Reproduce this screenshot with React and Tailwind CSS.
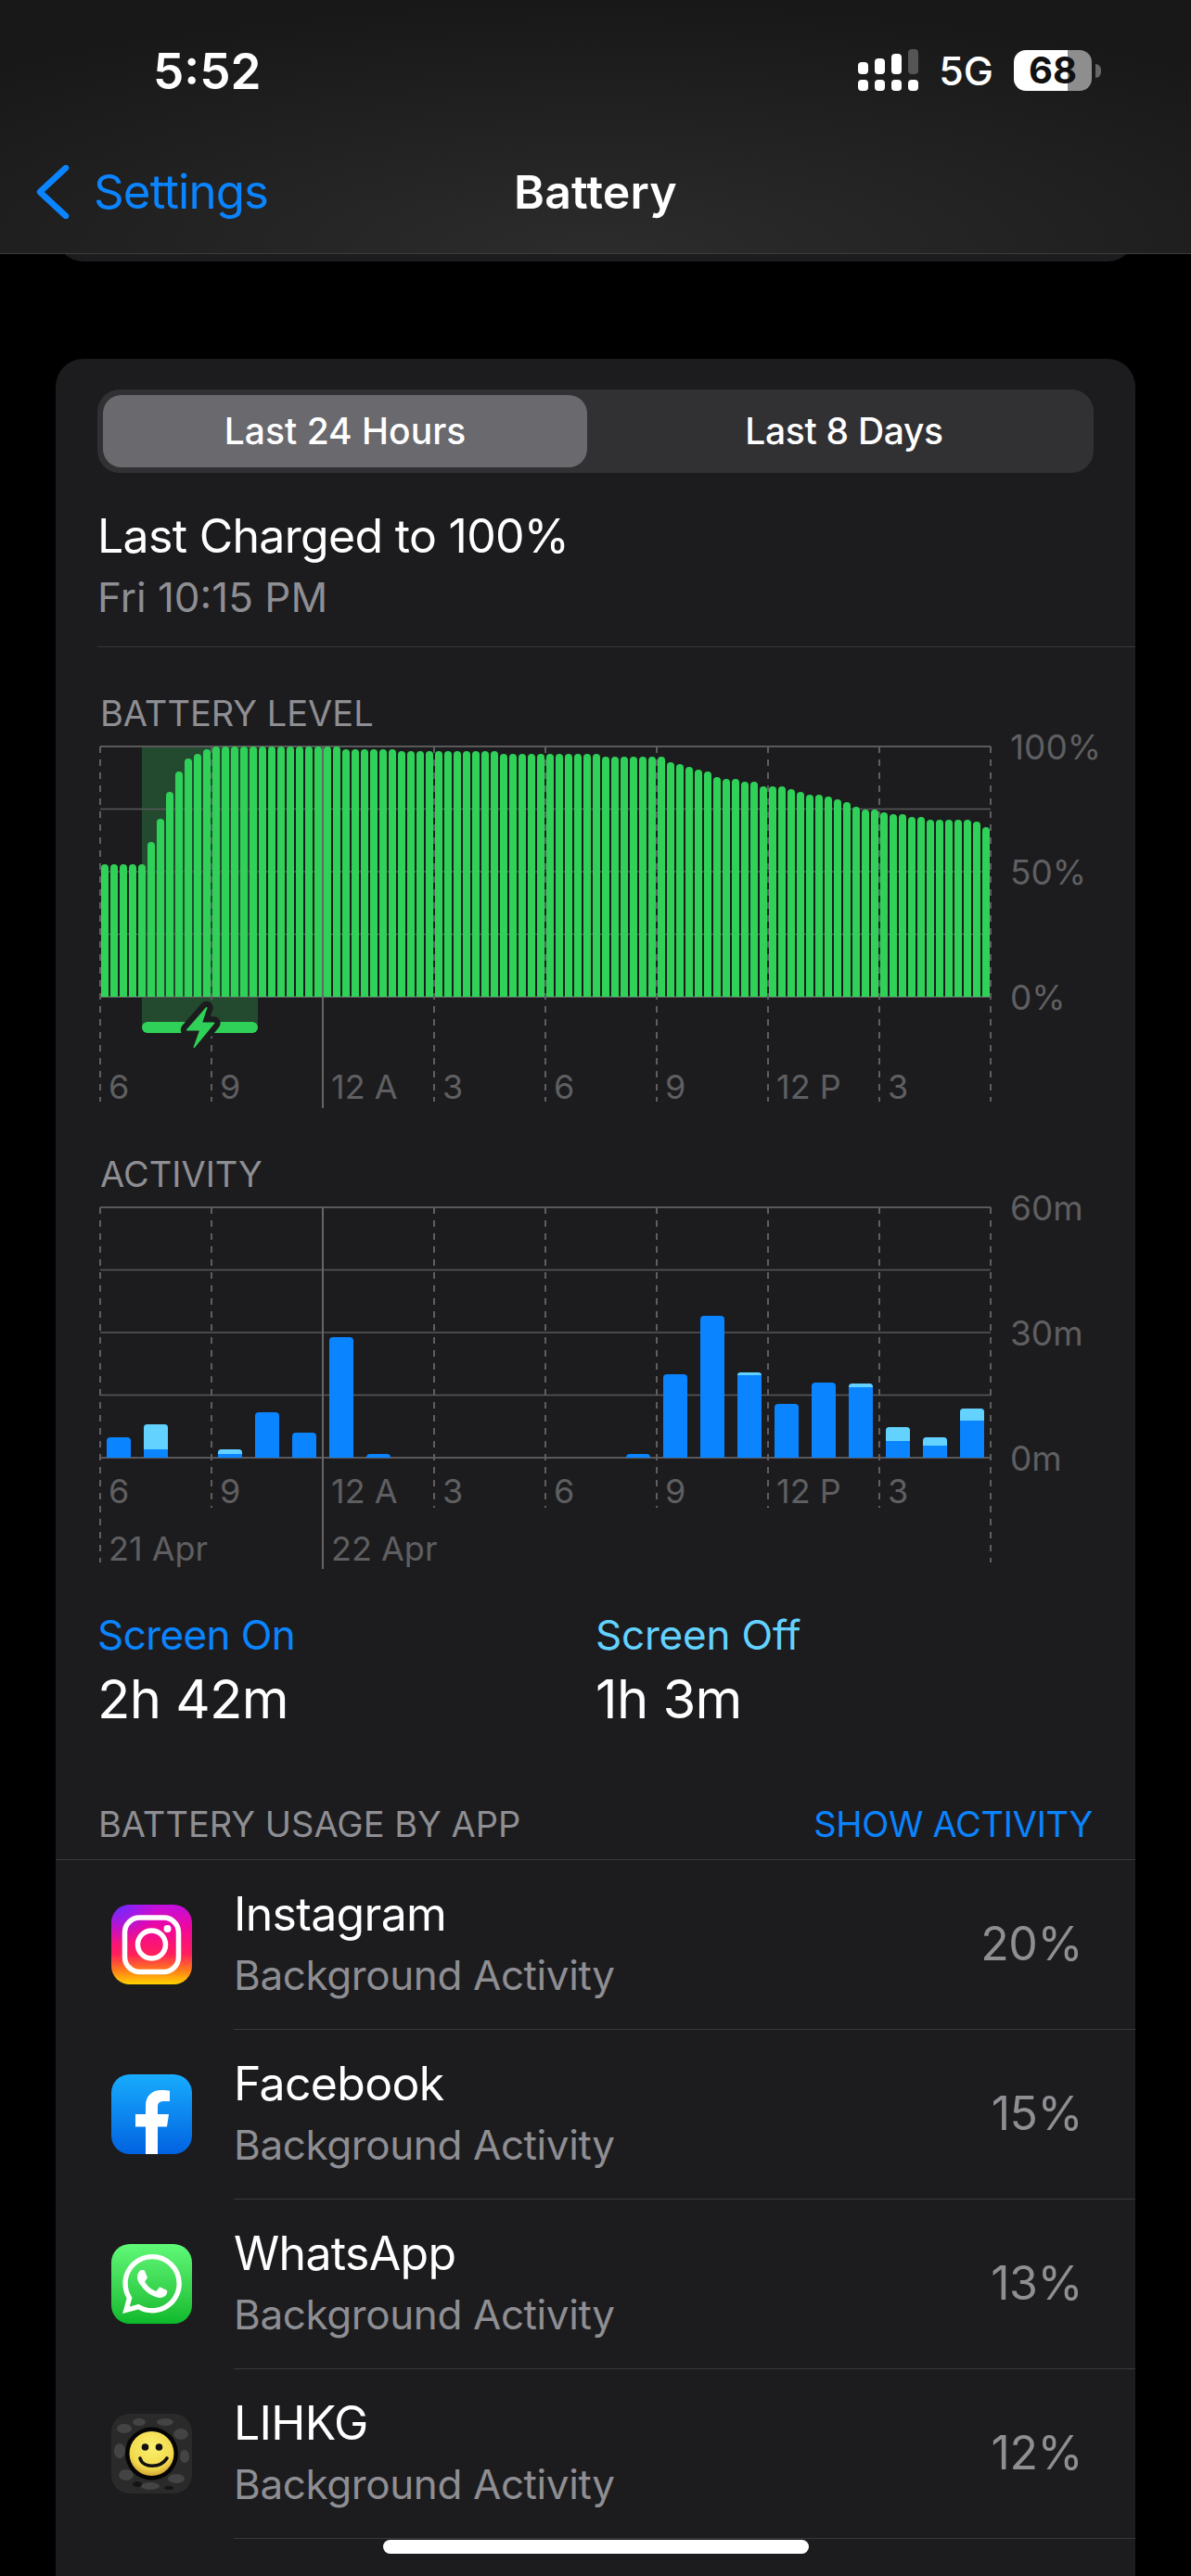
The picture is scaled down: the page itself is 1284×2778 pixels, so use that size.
import React from 'react';
import { SiWhatsapp } from 'react-icons/si';

const batteryTops = [
  932, 932, 932, 932, 932, 908, 883, 854, 832, 818, 813, 808,
  805, 805, 805, 805, 805, 805, 805, 805, 805, 805, 805, 805, 805, 805,
  808, 808, 808, 808, 808, 808,
  810, 810, 810, 810, 810, 810, 810, 810, 810, 810, 810,
  813, 813, 813, 813, 813, 813, 813, 813, 813, 813, 813,
  816, 816, 816, 816, 816, 816, 816,
  822, 824, 827, 830, 832, 838, 840, 840, 843, 843, 848, 848, 848, 851, 854, 857, 857, 859, 862, 865,
  870, 873, 873, 876, 878, 878, 881, 881, 884, 884, 884, 884, 884, 886, 892,
];

// [index, total height, light part on top]
const activityBars = [
  [0, 22, 0], [1, 36, 27], [3, 9, 5], [4, 49, 0], [5, 27, 0], [6, 130, 0], [7, 4, 0],
  [14, 4, 0], [15, 90, 0], [16, 153, 0], [17, 92, 3], [18, 58, 0], [19, 81, 0], [20, 80, 4],
  [21, 33, 15], [22, 22, 9], [23, 53, 13],
];

const apps = [
  { name: 'Instagram', pct: '20%', icon: <InstagramIcon /> },
  { name: 'Facebook', pct: '15%', icon: <FacebookIcon /> },
  { name: 'WhatsApp', pct: '13%', icon: <WhatsAppIcon /> },
  { name: 'LIHKG', pct: '12%', icon: <LihkgIcon /> },
];

function InstagramIcon() {
  return (
    <svg width="87" height="86" viewBox="0 0 87 86">
      <defs>
        <linearGradient id="igBase" x1="0" y1="0" x2="0" y2="1">
          <stop offset="0" stopColor="#c00fe0" />
          <stop offset="0.3" stopColor="#f2069a" />
          <stop offset="0.62" stopColor="#ff1f5c" />
          <stop offset="0.82" stopColor="#ff7a1a" />
          <stop offset="1" stopColor="#ffd400" />
        </linearGradient>
        <radialGradient id="igPurple" cx="0.08" cy="0" r="0.5">
          <stop offset="0" stopColor="#6a2cff" />
          <stop offset="1" stopColor="#8a20ff" stopOpacity="0" />
        </radialGradient>
      </defs>
      <rect width="87" height="86" rx="20" fill="url(#igBase)" />
      <rect width="87" height="86" rx="20" fill="url(#igPurple)" />
      <rect x="14.5" y="14" width="58" height="58.5" rx="16" fill="none" stroke="#fff" strokeWidth="5.5" />
      <circle cx="43.5" cy="43" r="15" fill="none" stroke="#fff" strokeWidth="5.5" />
      <circle cx="60.5" cy="26" r="4" fill="#fff" />
    </svg>
  );
}

function FacebookIcon() {
  return (
    <svg width="87" height="86" viewBox="0 0 87 86">
      <defs>
        <linearGradient id="fbBase" x1="0" y1="0" x2="0" y2="1">
          <stop offset="0" stopColor="#18acfe" />
          <stop offset="1" stopColor="#0162e0" />
        </linearGradient>
      </defs>
      <rect width="87" height="86" rx="20" fill="url(#fbBase)" />
      <path
        d="M37 86V56.5H26V43H37V34C37 23 44 17 54 17C58 17 61 17.3 63 17.7V29H57C52 29 50 31 50 35V43H62L60 56.5H50V86Z"
        fill="#fff"
      />
    </svg>
  );
}

function WhatsAppIcon() {
  return (
    <div className="w-[87px] h-[86px] rounded-[20px] bg-linear-to-b from-[#5ff978] to-[#0ab92a] flex items-center justify-center text-white">
      <SiWhatsapp size={64} />
    </div>
  );
}

function LihkgIcon() {
  return (
    <svg width="87" height="86" viewBox="0 0 87 86">
      <defs>
        <radialGradient id="smiley" cx="0.5" cy="0.35" r="0.7">
          <stop offset="0" stopColor="#fbf06e" />
          <stop offset="0.7" stopColor="#f1d94c" />
          <stop offset="1" stopColor="#c9922c" />
        </radialGradient>
      </defs>
      <rect width="87" height="86" rx="20" fill="#2a2a2a" />
      <g fill="#444">
        <ellipse cx="14" cy="16" rx="8" ry="5" />
        <ellipse cx="30" cy="9" rx="7" ry="4" />
        <ellipse cx="58" cy="9" rx="9" ry="4" />
        <ellipse cx="75" cy="22" rx="8" ry="6" />
        <ellipse cx="9" cy="40" rx="6" ry="8" />
        <ellipse cx="79" cy="46" rx="5" ry="7" />
        <ellipse cx="16" cy="66" rx="8" ry="6" />
        <ellipse cx="70" cy="70" rx="9" ry="5" />
        <ellipse cx="42" cy="78" rx="10" ry="4" />
      </g>
      <g fill="#141414">
        <ellipse cx="22" cy="30" rx="5" ry="3" />
        <ellipse cx="66" cy="35" rx="4" ry="3" />
        <ellipse cx="28" cy="76" rx="5" ry="3" />
        <ellipse cx="62" cy="80" rx="5" ry="2" />
      </g>
      <circle cx="43.5" cy="43" r="28.5" fill="#050505" />
      <circle cx="43.5" cy="43" r="24" fill="url(#smiley)" />
      <circle cx="36.5" cy="36" r="3.8" fill="#111" />
      <circle cx="51.5" cy="36" r="3.8" fill="#111" />
      <path d="M31 48C34 59 53 59 60 48" fill="none" stroke="#111" strokeWidth="3.6" strokeLinecap="round" />
    </svg>
  );
}

function StatusBar() {
  const topBars = [
    { h: 'h-[13px]', c: 'bg-white' },
    { h: 'h-[17px]', c: 'bg-white' },
    { h: 'h-[22px]', c: 'bg-white' },
    { h: 'h-[27px]', c: 'bg-[#555]' },
  ];
  return (
    <div className="flex items-center justify-between pl-[165px] pr-[97px] pt-[48px] h-[106px]">
      <span className="text-[53px] leading-[58px] font-semibold text-white">5:52</span>
      <div className="flex items-center -mt-[2px]">
        <div className="flex flex-col gap-[6px] mt-[-1px]">
          <div className="flex items-end gap-[7px]">
            {topBars.map((b, i) => (
              <div key={i} className={`w-[11px] rounded-[4px] ${b.h} ${b.c}`} />
            ))}
          </div>
          <div className="flex gap-[7px]">
            {[0, 1, 2, 3].map((i) => (
              <div key={i} className="w-[11px] h-[12px] rounded-[4px] bg-white" />
            ))}
          </div>
        </div>
        <span className="ml-[22px] text-[43px] leading-[48px] font-medium text-white">5G</span>
        <div className="ml-[22px] w-[84px] h-[44px] rounded-[13px] bg-[linear-gradient(90deg,#fff_69%,#8e8e8e_69%)] flex items-center justify-center text-[40px] leading-[44px] font-bold text-[#111]">
          68
        </div>
        <div className="ml-[4px] w-[6px] h-[15px] rounded-r-full bg-[#666]" />
      </div>
    </div>
  );
}

function Header() {
  return (
    <div className="relative z-10 h-[274px] border-b border-[#3d3d3d] bg-[radial-gradient(ellipse_75%_100%_at_50%_100%,#2c2c2c,#181818)]">
      <StatusBar />
      <div className="grid grid-cols-3 items-center h-[60px] mt-[71px]">
        <div className="flex items-center pl-[38px] gap-[25px]">
          <svg width="38" height="58" viewBox="0 0 38 58" fill="none">
            <path d="M33 3L5 29L33 55" stroke="#0a84ff" strokeWidth="6.5" strokeLinecap="round" strokeLinejoin="round" />
          </svg>
          <span className="text-[51px] leading-[60px] text-[#0a84ff] tracking-[-0.9px]">Settings</span>
        </div>
        <div className="text-center text-[50px] leading-[60px] font-semibold text-white tracking-[0.2px]">Battery</div>
      </div>
    </div>
  );
}

function Gridlines({ tickEnd, dayTicks }) {
  const rows = [1, 68.5, 136, 203.5, 271];
  const cols = [0, 1, 2, 3, 4, 5, 6, 7, 8];
  return (
    <g>
      {rows.map((y, i) => (
        <line
          key={y}
          x1="1"
          x2="961"
          y1={y}
          y2={y}
          stroke="#59595b"
          strokeWidth={i === 0 || i === 4 ? 2 : 1.5}
        />
      ))}
      {cols.map((c) => {
        const x = 1 + c * 120;
        if (c === 2) {
          return <line key={c} x1={x} x2={x} y1="1" y2="391" stroke="#666668" strokeWidth="2" />;
        }
        const end = c === 0 || c === 8 ? dayTicks : tickEnd;
        return (
          <line key={c} x1={x} x2={x} y1="1" y2={end} stroke="#5e5e60" strokeWidth="2" strokeDasharray="7 7" />
        );
      })}
    </g>
  );
}

function BatteryPlot() {
  const bolt = 'M115.7 282.7L94.7 306.7H109L102.3 325.3L123.7 299.3H110.3Z';
  return (
    <svg width="962" height="392" viewBox="0 0 962 392" className="block">
      <rect x="46" y="1" width="125" height="302" fill="#23492f" />
      <Gridlines tickEnd={384} dayTicks={384} />
      {batteryTops.map((top, i) => {
        const x = 2 + i * 10;
        const y = top - 804;
        return <path key={i} d={`M${x} 271V${y + 4}A4 4 0 0 1 ${x + 8} ${y + 4}V271Z`} fill="#30d158" />;
      })}
      <rect x="46" y="298" width="125" height="12" rx="6" fill="#30d158" />
      <path d={bolt} fill="#1c1c1e" stroke="#1c1c1e" strokeWidth="14" strokeLinejoin="round" />
      <path d={bolt} fill="#30d158" stroke="#30d158" strokeWidth="1.5" strokeLinejoin="round" />
    </svg>
  );
}

function ActivityPlot() {
  return (
    <svg width="962" height="392" viewBox="0 0 962 392" className="block">
      <Gridlines tickEnd={325} dayTicks={384} />
      {activityBars.map(([i, h, light]) => {
        const x = 8 + i * 40;
        const y = 271 - h;
        const r = Math.min(4, h);
        return (
          <g key={i}>
            <path d={`M${x} 271V${y + r}Q${x} ${y} ${x + r} ${y}H${x + 26 - r}Q${x + 26} ${y} ${x + 26} ${y + r}V271Z`} fill="#0a84ff" />
            {light > 0 && (
              <path
                d={`M${x} ${y + light}V${y + Math.min(r, light)}Q${x} ${y} ${x + r} ${y}H${x + 26 - r}Q${x + 26} ${y} ${x + 26} ${y + Math.min(r, light)}V${y + light}Z`}
                fill="#64d2ff"
              />
            )}
          </g>
        );
      })}
    </svg>
  );
}

function Chart({ title, plot, yLabels, xTop, dates }) {
  const xLabels = ['6', '9', '12 A', '3', '6', '9', '12 P', '3'];
  return (
    <div>
      <div className="ml-[48px] text-[38px] leading-[44px] text-[#8e8e93] tracking-[0px]">{title}</div>
      <div className="flex ml-[47px] mt-[13px]">
        <div className="relative w-[962px] h-[392px]">
          {plot}
          <div className={`absolute left-0 w-[960px] grid grid-cols-8 text-[36px] leading-[40px] text-[#5f5f61] ${xTop}`}>
            {xLabels.map((l, i) => (
              <span key={i} className="pl-[10px]">{l}</span>
            ))}
          </div>
          {dates && (
            <div className="absolute left-0 top-[349px] w-[960px] grid grid-cols-8 text-[36px] leading-[40px] text-[#5f5f61]">
              <span className="col-span-2 pl-[10px]">21 Apr</span>
              <span className="col-span-2 pl-[10px]">22 Apr</span>
            </div>
          )}
        </div>
        <div className="ml-[20px] -mt-[18px] h-[310px] flex flex-col justify-between text-[37px] leading-[40px] text-[#5f5f61]">
          {yLabels.map((l) => (
            <span key={l}>{l}</span>
          ))}
        </div>
      </div>
    </div>
  );
}

function AppRow({ app }) {
  return (
    <div className="flex h-[183px]">
      <div className="w-[192px] shrink-0 pl-[60px] pt-[48px]">{app.icon}</div>
      <div className="flex-1 border-b border-[#38383a] flex justify-between pr-[57px]">
        <div className="pt-[28px]">
          <div className="text-[50px] leading-[60px] text-white tracking-[-0.7px]">{app.name}</div>
          <div className="mt-[10px] text-[44px] leading-[52px] text-[#8e8e93] tracking-[-0.4px]">Background Activity</div>
        </div>
        <div className="pt-[60px] text-[50px] leading-[60px] text-[#8e8e93] tracking-[-0.5px]">{app.pct}</div>
      </div>
    </div>
  );
}

export default function App() {
  return (
    <div className="relative w-[1284px] h-[2778px] overflow-hidden bg-black font-['Inter',sans-serif]">
      <Header />
      <div className="mx-[60px] -mt-[32px] h-[40px] rounded-b-[30px] bg-[#1c1c1e]" />

      <div className="mx-[60px] mt-[105px] pt-[33px] rounded-t-[30px] bg-[#1c1c1e]">
        {/* Range picker */}
        <div className="mx-[45px] h-[90px] p-[6px] flex rounded-[24px] bg-[#313134] text-[39px] font-medium text-white">
          <div className="w-[522px] rounded-[20px] bg-[#69696e] flex items-center justify-center">Last 24 Hours</div>
          <div className="flex-1 flex items-center justify-center pl-[14px] tracking-[-0.3px]">Last 8 Days</div>
        </div>

        <div className="ml-[45px] mt-[38px] text-[50px] leading-[60px] text-white tracking-[-0.7px]">Last Charged to 100%</div>
        <div className="ml-[45px] mt-[10px] text-[44px] leading-[52px] text-[#8e8e93]">Fri 10:15 PM</div>
        <div className="ml-[45px] mt-[27px] h-px bg-[#38383a]" />

        <div className="mt-[49px]">
          <Chart
            title="BATTERY LEVEL"
            plot={<BatteryPlot />}
            yLabels={['100%', '50%', '0%']}
            xTop="top-[348px]"
          />
        </div>
        <div className="mt-[48px]">
          <Chart
            title="ACTIVITY"
            plot={<ActivityPlot />}
            yLabels={['60m', '30m', '0m']}
            xTop="top-[287px]"
            dates
          />
        </div>

        <div className="flex mt-[44px] pl-[45px]">
          <div className="w-[537px]">
            <div className="text-[44px] leading-[52px] text-[#0a84ff] tracking-[-0.6px]">Screen On</div>
            <div className="mt-[9px] text-[58px] leading-[68px] text-white tracking-[-0.6px]">2h 42m</div>
          </div>
          <div>
            <div className="text-[44px] leading-[52px] text-[#64d2ff] tracking-[-0.2px]">Screen Off</div>
            <div className="mt-[9px] text-[58px] leading-[68px] text-white tracking-[-0.6px]">1h 3m</div>
          </div>
        </div>

        <div className="flex justify-between mt-[79px] px-[46px] text-[38px] leading-[44px]">
          <span className="text-[#8e8e93]">BATTERY USAGE BY APP</span>
          <span className="text-[#0a84ff] tracking-[-0.3px]">SHOW ACTIVITY</span>
        </div>
        <div className="mt-[16px] h-px bg-[#38383a]" />

        {apps.map((app) => (
          <AppRow key={app.name} app={app} />
        ))}
        <div className="h-[60px]" />
      </div>

      {/* Home indicator */}
      <div className="absolute left-[413px] top-[2739px] w-[459px] h-[15px] rounded-full bg-white" />
    </div>
  );
}
